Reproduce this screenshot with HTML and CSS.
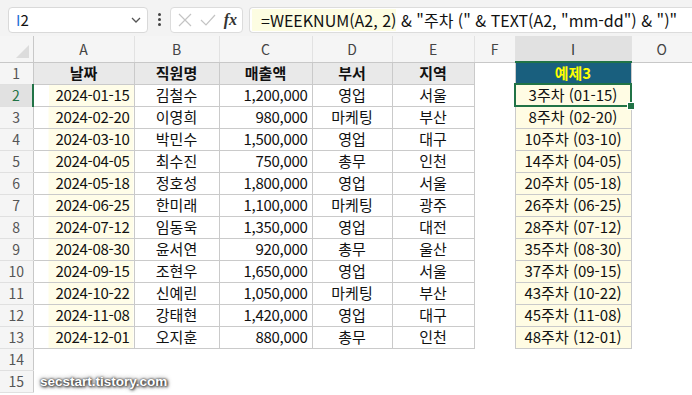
FILE: index.html
```html
<!DOCTYPE html>
<html lang="ko">
<head>
  <meta charset="UTF-8">
  <title>WEEKNUM 예제3</title>
  <link rel="stylesheet" href="styles.css">
</head>
<body>
  <div class="formula-bar">
    <div class="name-box">
      <span class="cell-ref"><span class="caret">I</span>2</span>
      <svg class="chevron" width="10" height="6" viewBox="0 0 10 6"><path d="M1 1 L5 5 L9 1" fill="none" stroke="#555" stroke-width="1.3"/></svg>
    </div>
    <div class="dots">
      <span></span><span></span><span></span>
    </div>
    <div class="fx-buttons">
      <svg width="14" height="14" viewBox="0 0 14 14"><path d="M1 1 L13 13 M13 1 L1 13" stroke="#c4c4c4" stroke-width="1.2"/></svg>
      <svg width="16" height="14" viewBox="0 0 16 14"><path d="M1 7 L6 12 L15 2" fill="none" stroke="#c4c4c4" stroke-width="1.2"/></svg>
      <span class="fx">fx</span>
    </div>
    <div class="formula-input">
      <span class="ftext"><span class="hl">=WEEKNUM(A2, 2)</span> &amp; "주차 (" &amp; TEXT(A2, "mm-dd") &amp; ")"</span>
    </div>
  </div>

  <div class="sheet">
    <table class="grid">
      <colgroup>
        <col class="c-row"><col class="c-a"><col class="c-b"><col class="c-c"><col class="c-d"><col class="c-e"><col class="c-f"><col class="c-i"><col class="c-o">
      </colgroup>
      <thead>
        <tr class="col-head">
          <th class="corner"><span class="tri"></span></th>
          <th>A</th><th>B</th><th>C</th><th>D</th><th>E</th><th>F</th><th class="sel-col">I</th><th class="last">O</th>
        </tr>
      </thead>
      <tbody id="rows"></tbody>
    </table>
    <div class="watermark">secstart.tistory.com</div>
  </div>

  <script>
    // Sheet data: date, name, sales, dept, region
    const data = [
      ["2024-01-15", "김철수", "1,200,000", "영업", "서울"],
      ["2024-02-20", "이영희", "980,000", "마케팅", "부산"],
      ["2024-03-10", "박민수", "1,500,000", "영업", "대구"],
      ["2024-04-05", "최수진", "750,000", "총무", "인천"],
      ["2024-05-18", "정호성", "1,800,000", "영업", "서울"],
      ["2024-06-25", "한미래", "1,100,000", "마케팅", "광주"],
      ["2024-07-12", "임동욱", "1,350,000", "영업", "대전"],
      ["2024-08-30", "윤서연", "920,000", "총무", "울산"],
      ["2024-09-15", "조현우", "1,650,000", "영업", "서울"],
      ["2024-10-22", "신예린", "1,050,000", "마케팅", "부산"],
      ["2024-11-08", "강태현", "1,420,000", "영업", "대구"],
      ["2024-12-01", "오지훈", "880,000", "총무", "인천"]
    ];
    const weeks = [3, 8, 10, 14, 20, 26, 28, 35, 37, 43, 45, 48];

    let html = '<tr><th class="row-num">1</th>' +
      '<td class="d head">날짜</td><td class="d head">직원명</td><td class="d head">매출액</td>' +
      '<td class="d head">부서</td><td class="d head">지역</td><td></td>' +
      '<td class="d title">예제3</td><td></td></tr>';

    data.forEach((r, i) => {
      const row = i + 2;
      const sel = row === 2;
      html += '<tr><th class="row-num' + (sel ? ' sel-row' : '') + '">' + row + '</th>' +
        '<td class="d date num">' + r[0] + '</td>' +
        '<td class="d center">' + r[1] + '</td>' +
        '<td class="d right num">' + r[2] + '</td>' +
        '<td class="d center">' + r[3] + '</td>' +
        '<td class="d center">' + r[4] + '</td>' +
        '<td></td>' +
        '<td class="d week' + (sel ? ' active' : '') + '">' + weeks[i] + '주차 (' + r[0].slice(5) + ')' +
        (sel ? '<span class="handle"></span>' : '') + '</td>' +
        '<td></td></tr>';
    });

    html += '<tr><th class="row-num">14</th><td></td><td></td><td></td><td></td><td></td><td></td><td></td><td></td></tr>';
    html += '<tr><th class="row-num">15</th><td></td><td></td><td></td><td></td><td></td><td></td><td></td><td></td></tr>';
    document.getElementById("rows").innerHTML = html;
  </script>
</body>
</html>
```

FILE: styles.css
```css
body {
  margin: 0;
  background-color: #fff;
  font-family: "Noto Sans CJK KR", "Noto Sans", sans-serif;
  color: #111;
  overflow: hidden;
}

.formula-bar {
  height: 36px;
  background-color: #f3f3f3;
  display: flex;
  align-items: center;
  padding-left: 8px;
  box-sizing: border-box;
  padding-top: 3px;
}

.name-box {
  width: 140px;
  height: 26px;
  box-sizing: border-box;
  background-color: #fff;
  border: 1px solid #d9d9d9;
  border-radius: 4px;
  display: flex;
  align-items: center;
  justify-content: space-between;
  padding: 0 6px 0 7px;
  font-size: 15px;
}

.caret {
  color: #1f6fd6;
}

.dots {
  width: 22px;
  display: flex;
  flex-direction: column;
  align-items: center;
  gap: 2px;
}

.dots span {
  width: 3px;
  height: 3px;
  border-radius: 50%;
  background-color: #444;
}

.fx-buttons {
  width: 73px;
  height: 26px;
  box-sizing: border-box;
  background-color: #fff;
  border: 1px solid #dcdcdc;
  border-radius: 4px;
  display: flex;
  align-items: center;
  justify-content: space-between;
  padding: 0 5px 0 7px;
}

.fx {
  font-family: "Liberation Serif", serif;
  font-style: italic;
  font-weight: bold;
  font-size: 16px;
  color: #333;
}

.formula-input {
  flex: 1;
  margin-left: 6px;
  height: 26px;
  box-sizing: border-box;
  background-color: #fff;
  border: 1px solid #dcdcdc;
  border-right: none;
  border-radius: 4px 0 0 4px;
  display: flex;
  align-items: center;
  overflow: hidden;
  padding-left: 2px;
}

.ftext {
  white-space: nowrap;
  font-size: 16px;
  line-height: 22px;
}

.hl {
  display: inline-block;
  background-color: #fdfde2;
  padding-left: 9px;
}

.sheet {
  position: relative;
}

.grid {
  border-collapse: collapse;
  table-layout: fixed;
  width: 692px;
  font-size: 15px;
  line-height: 18px;
}

.c-row { width: 33px; }
.c-a { width: 101px; }
.c-b { width: 85px; }
.c-c { width: 93px; }
.c-d { width: 80px; }
.c-e { width: 82px; }
.c-f { width: 41px; }
.c-i { width: 116px; }
.c-o { width: 61px; }

.col-head th {
  height: 26px;
  box-sizing: border-box;
  background-color: #f5f5f5;
  border-bottom: 1px solid #c8c8c8;
  border-left: 1px solid #e2e2e2;
  font-weight: normal;
  font-size: 14px;
  color: #444;
  padding: 0;
}

.col-head .corner {
  border-left: none;
  border-right: 1px solid #c8c8c8;
  position: relative;
}

.tri {
  position: absolute;
  right: 4px;
  bottom: 4px;
  width: 0;
  height: 0;
  border-left: 13px solid transparent;
  border-bottom: 13px solid #dcdcdc;
}

.col-head .sel-col {
  background-color: #e1e1e1;
  border-bottom: 2px solid #217346;
  color: #333;
}

.grid td,
.row-num {
  height: 22px;
  box-sizing: border-box;
  padding: 0 4px;
  white-space: nowrap;
}

.row-num {
  background-color: #f5f5f5;
  border-right: 1px solid #c8c8c8;
  border-bottom: 1px solid #e0e0e0;
  font-weight: normal;
  font-size: 14px;
  color: #555;
  text-align: center;
}

.row-num.sel-row {
  background-color: #e1e1e1;
  color: #217346;
  border-right: 2px solid #217346;
}

.grid td.d {
  border: 1px solid #cacaca;
}

.num {
  letter-spacing: -0.3px;
}

.head {
  background-color: #e9e9e9;
  font-weight: bold;
  text-align: center;
}

.title {
  background-color: #195f7e;
  color: #ffff00;
  font-weight: bold;
  text-align: center;
}

.date {
  text-align: right;
  background: linear-gradient(to right, #fff 15px, #fffde8 15px);
}

.center {
  text-align: center;
}

.right {
  text-align: right;
}

.week {
  text-align: center;
  background-color: #fffce4;
}

.grid td.week.active {
  border: 2px solid #217346;
  position: relative;
}

.handle {
  position: absolute;
  right: -5px;
  bottom: -5px;
  width: 6px;
  height: 6px;
  background-color: #217346;
  border: 1px solid #fff;
}

.watermark {
  position: absolute;
  left: 40px;
  bottom: 4px;
  font-family: "Liberation Sans", sans-serif;
  font-weight: bold;
  font-size: 13.5px;
  color: #fff;
  text-shadow: 0 0 2px #333, 1px 1px 3px #222, 0 0 5px #555;
}
```
